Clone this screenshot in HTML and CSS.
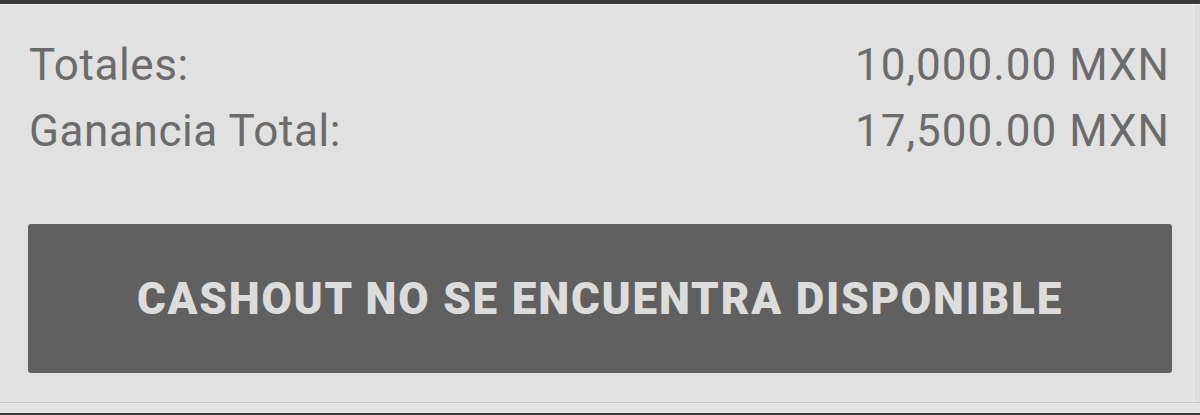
FILE: index.html
```html
<!DOCTYPE html>
<html lang="es">
<head>
  <meta charset="UTF-8" />
  <meta name="viewport" content="width=device-width, initial-scale=1.0"/>
  <title>Cashout</title>
  <link rel="stylesheet" href="styles.css">
</head>
<body>
  <div class="topbar"></div>
  <div class="summary">
    <div class="rows">
      <div class="row">
        <span class="label">Totales:</span>
        <span class="value">10,000.00 MXN</span>
      </div>
      <div class="row">
        <span class="label">Ganancia Total:</span>
        <span class="value">17,500.00 MXN</span>
      </div>
    </div>
    <button class="cashout" disabled>CASHOUT NO SE ENCUENTRA DISPONIBLE</button>
  </div>
</body>
</html>
```

FILE: styles.css
```css
html {
  background: #3a3a3a;
}
body {
  margin: 0;
  height: 413px;
  background: #e4e4e4;
  font-family: Roboto, "Liberation Sans", sans-serif;
}
.topbar {
  height: 4px;
  background: #3a3a3a;
}
.summary {
  background: #e1e1e1;
  border-top: 1px solid #f3f3f3;
  border-bottom: 1px solid #c6c6c6;
  box-shadow: inset -6px 0 0 #dedede, inset -7px 0 0 #ececec;
  padding: 27px 28px 29px 28px;
}
.row {
  display: flex;
  justify-content: space-between;
  font-size: 44px;
  line-height: 66px;
  color: #6b6b6b;
  padding-right: 2px;
}
.label {
  padding-left: 1px;
  letter-spacing: 0.6px;
}
.value {
  letter-spacing: 1px;
}
.cashout {
  display: block;
  width: 100%;
  height: 149px;
  margin-top: 60px;
  border: none;
  border-radius: 3px;
  background: #606060;
  color: #dcdcdc;
  font-family: Roboto, "Liberation Sans", sans-serif;
  font-weight: 900;
  font-size: 44px;
  letter-spacing: 1.8px;
}
```
